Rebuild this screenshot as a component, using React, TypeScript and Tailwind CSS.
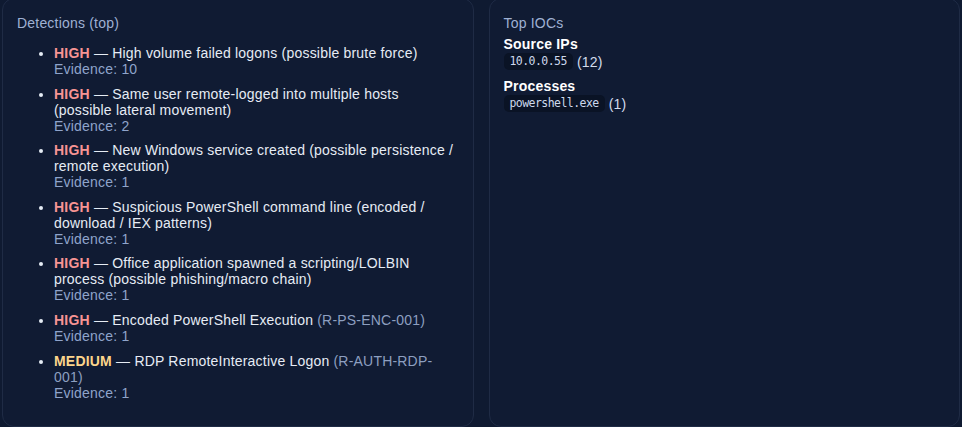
const detections = [
  { sev: "HIGH", title: "High volume failed logons (possible brute force)", evidence: 10 },
  { sev: "HIGH", title: "Same user remote-logged into multiple hosts (possible lateral movement)", evidence: 2 },
  { sev: "HIGH", title: "New Windows service created (possible persistence / remote execution)", evidence: 1 },
  { sev: "HIGH", title: "Suspicious PowerShell command line (encoded / download / IEX patterns)", evidence: 1 },
  { sev: "HIGH", title: "Office application spawned a scripting/LOLBIN process (possible phishing/macro chain)", evidence: 1 },
  { sev: "HIGH", title: "Encoded PowerShell Execution", rule: "R-PS-ENC-001", evidence: 1 },
  { sev: "MEDIUM", title: "RDP RemoteInteractive Logon", rule: "R-AUTH-RDP-001", evidence: 1 },
]

const iocs = [
  { label: "Source IPs", items: [{ value: "10.0.0.55", count: 12 }] },
  { label: "Processes", items: [{ value: "powershell.exe", count: 1 }] },
]

export default function App() {
  return (
    <div className="h-[427px] overflow-hidden bg-[#0f1a31] font-['Liberation_Sans',Arial,sans-serif] text-[14px] leading-[normal] tracking-[0.2px] text-[#e6ecf5]">
      <div className="-mt-[2px] grid grid-cols-2 gap-[15px] px-[2px]">
        {/* Detections */}
        <div className="rounded-xl border border-[#1f2b45] bg-[#101b33] px-[14px] pt-4 pb-[17px]">
          <div className="text-[#9fb1d3]">Detections (top)</div>
          <ul className="mt-[14px] list-disc pl-[37px]">
            {detections.map((d, i) => (
              <li key={i} className="mb-[8.6px]">
                <span className={`font-bold ${d.sev === "HIGH" ? "text-[#f79494]" : "text-[#fcd58c]"}`}>{d.sev}</span>
                {" — "}
                {d.title}
                {d.rule && <span className="text-[#8d9fc0]"> ({d.rule})</span>}
                <div className="text-[#8fa4cb]">Evidence: {d.evidence}</div>
              </li>
            ))}
          </ul>
        </div>

        {/* IOCs */}
        <div className="rounded-xl border border-[#1f2b45] bg-[#101b33] px-[14px] pt-4 pb-[17px]">
          <div className="mb-[5px] text-[#9fb1d3]">Top IOCs</div>
          {iocs.map((g) => (
            <div key={g.label} className="mb-2">
              <div className="font-bold text-white">{g.label}</div>
              {g.items.map((it) => (
                <div key={it.value} className="mt-px flex items-center gap-1 text-[#d3dcec]">
                  <span className="rounded-[5px] bg-[#0a1325] px-1.5 py-px font-['DejaVu_Sans_Mono',monospace] text-[11.5px] leading-[15px] tracking-[-0.55px] text-[#cdd8ec]">
                    {it.value}
                  </span>
                  <span>({it.count})</span>
                </div>
              ))}
            </div>
          ))}
        </div>
      </div>
    </div>
  )
}
